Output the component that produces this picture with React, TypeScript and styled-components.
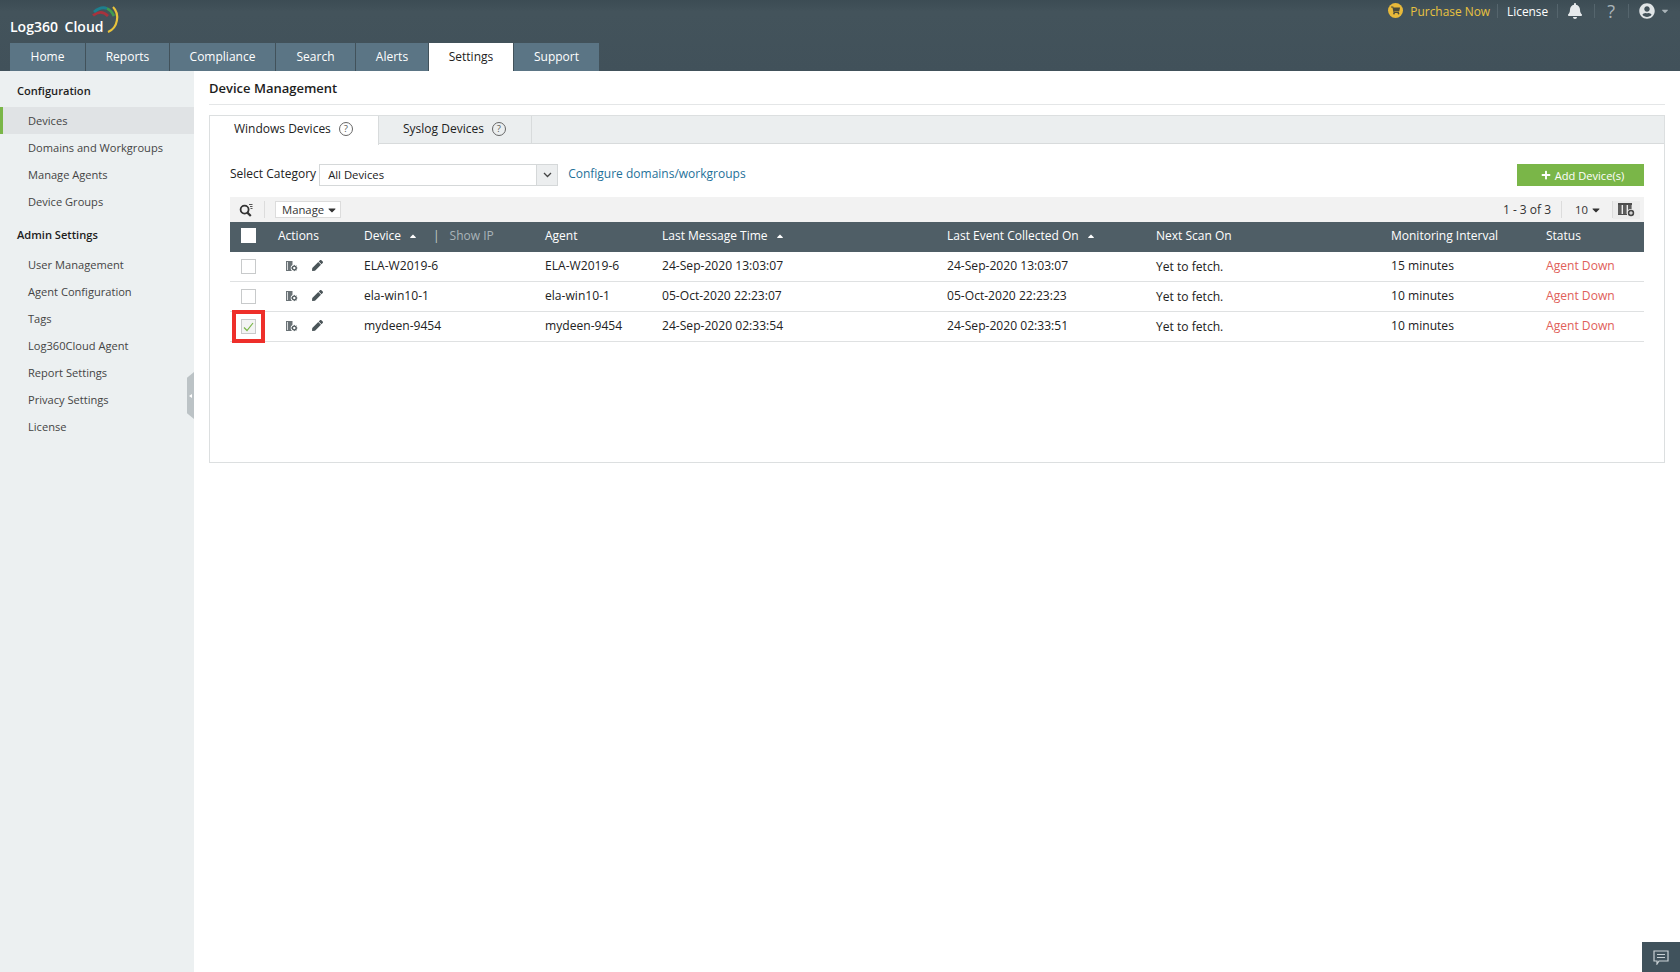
import React from "react";
import styled, { createGlobalStyle } from "styled-components";
import { FaBell, FaUserCircle, FaPen, FaPlus, FaShoppingCart, FaCaretDown, FaCaretUp } from "react-icons/fa";

const Global = createGlobalStyle`
  html, body { margin: 0; padding: 0; height: 100%; background: #fff; }
  body { font-family: "Open Sans", "Liberation Sans", sans-serif; font-size: 12px; color: #222; overflow: hidden; }
  #root { height: 100%; }
  * { box-sizing: border-box; }
`;

const Page = styled.div`
  height: 972px;
  display: flex;
  flex-direction: column;
  position: relative;
`;
const Header = styled.header`
  height: 71px;
  flex: none;
  background: linear-gradient(#3c4c54 0, #43535b 12px, #41515a 100%);
  padding: 0 0 0 10px;
  display: flex;
  flex-direction: column;
  justify-content: space-between;
`;
const TopRow = styled.div`
  height: 43px;
  display: flex;
  justify-content: space-between;
`;
const LogoWrap = styled.div`
  display: flex;
  align-items: flex-start;
  position: relative;
  width: 120px;
`;
const LogoText = styled.span`
  margin-top: 17px;
  color: #fff;
  font-size: 14px;
  font-weight: 600;
  white-space: nowrap;
  word-spacing: 3px;
`;
const LogoArc = styled.svg`
  position: absolute;
  left: 80px;
  top: 4px;
`;
const TopLinks = styled.div`
  display: flex;
  align-items: center;
  height: 21px;
  padding-right: 10px;
  color: #fff;
`;
const Cart = styled.span`
  width: 15px;
  height: 15px;
  border-radius: 50%;
  background: #e8b93a;
  color: #4a4a3a;
  display: inline-flex;
  align-items: center;
  justify-content: center;
  font-size: 9px;
  margin-right: 7px;
`;
const Purchase = styled.span`
  color: #e9c23f;
  font-size: 11.9px;
`;
const License = styled.span`
  color: #fff;
  font-size: 11.9px;
`;
const TopSep = styled.span<{ $l: number; $r: number }>`
  width: 1px;
  height: 14px;
  background: #55656d;
  margin: 0 ${(p) => p.$r}px 0 ${(p) => p.$l}px;
`;
const BellIcon = styled.span`
  color: #e6eaec;
  display: inline-flex;
  align-items: center;
  font-size: 16px;
`;
const UserIcon = styled.span`
  color: #dfe4e6;
  display: inline-flex;
  align-items: center;
  font-size: 16px;
`;
const UserCaret = styled.span`
  color: #aab4b9;
  display: inline-flex;
  align-items: center;
  font-size: 10px;
  margin-left: 5px;
`;
const Question = styled.span`
  color: #aab4b9;
  font-size: 18px;
  line-height: 1;
`;
const MainTabs = styled.nav`
  display: flex;
  height: 28px;
  gap: 1px;
`;
const MainTab = styled.div<{ $w: number; $active?: boolean }>`
  width: ${(p) => p.$w}px;
  background: ${(p) => (p.$active ? "#fff" : "#5b7585")};
  color: ${(p) => (p.$active ? "#222" : "#fff")};
  display: flex;
  align-items: center;
  justify-content: center;
  font-size: 12px;
  padding-bottom: 1px;
`;
const Body = styled.div`
  flex: 1;
  display: flex;
  min-height: 0;
`;
const Sidebar = styled.aside`
  width: 194px;
  flex: none;
  background: #ecf0f1;
  position: relative;
  padding-top: 6px;
`;
const SideHead = styled.div<{ $top?: number; $h: number; $pb: number }>`
  height: ${(p) => p.$h}px;
  margin-top: ${(p) => p.$top ?? 0}px;
  padding: 0 0 ${(p) => p.$pb}px 17px;
  display: flex;
  align-items: center;
  font-size: 11.1px;
  font-weight: 600;
  color: #1d1d1d;
`;
const SideItem = styled.div<{ $active?: boolean }>`
  height: 27px;
  padding-left: ${(p) => (p.$active ? 25 : 28)}px;
  display: flex;
  align-items: center;
  font-size: 11.1px;
  color: #444;
  background: ${(p) => (p.$active ? "#e0e3e5" : "transparent")};
  border-left: ${(p) => (p.$active ? "3px solid #7ab648" : "none")};
`;
const Handle = styled.div`
  position: absolute;
  right: 0;
  top: 301px;
  width: 7px;
  height: 47px;
  background: #bcc3c6;
  clip-path: polygon(100% 0, 100% 100%, 0 88%, 0 12%);
  display: flex;
  align-items: center;
  justify-content: center;
  &::after {
    content: "";
    border: 2px solid transparent;
    border-right: 3px solid #fff;
    border-left: 0;
  }
`;
const Content = styled.main`
  flex: 1;
  padding: 0 15px 0 15px;
  min-width: 0;
`;
const Title = styled.h1`
  margin: 0;
  height: 34px;
  font-size: 13px;
  font-weight: 600;
  color: #1d1d1d;
  display: flex;
  align-items: center;
  border-bottom: 1px solid #e4e6e7;
`;
const Panel = styled.section`
  margin-top: 10px;
  height: 348px;
  border: 1px solid #dcdfe0;
`;
const PanelTabs = styled.div`
  height: 28px;
  display: flex;
  background: #ebeeef;
  border-bottom: 1px solid #d8dbdc;
`;
const PanelTab = styled.div<{ $w: number; $active?: boolean }>`
  width: ${(p) => p.$w}px;
  height: ${(p) => (p.$active ? 29 : 28)}px;
  padding: 0 0 ${(p) => (p.$active ? 4 : 3)}px 24px;
  background: ${(p) => (p.$active ? "#fff" : "transparent")};
  border-right: 1px solid #d8dbdc;
  display: flex;
  align-items: center;
  font-size: 12px;
  color: #222;
  gap: 8px;
`;
const Help = styled.span`
  width: 14px;
  height: 14px;
  border: 1px solid #666;
  border-radius: 50%;
  display: inline-flex;
  align-items: center;
  justify-content: center;
  font-size: 9.5px;
  color: #555;
`;
const PanelBody = styled.div`
  padding: 20px 20px 0 20px;
  position: relative;
`;
const FilterRow = styled.div`
  display: flex;
  align-items: center;
  height: 22px;
`;
const FilterLabel = styled.label`
  font-size: 12px;
  color: #222;
  margin-right: 3px;
  margin-top: -3px;
`;
const Select = styled.div`
  width: 239px;
  height: 22px;
  border: 1px solid #d5d8d9;
  display: flex;
  font-size: 11.3px;
  align-items: center;
  padding-left: 8px;
  justify-content: space-between;
  color: #222;
  line-height: 18px;
`;
const SelectArrow = styled.span`
  width: 21px;
  height: 20px;
  background: #eceeef;
  border-left: 1px solid #d5d8d9;
  display: flex;
  align-items: center;
  justify-content: center;
`;
const ConfLink = styled.a`
  color: #1f7199;
  font-size: 12px;
  margin-left: 10px;
  margin-top: -3px;
`;
const AddButton = styled.button`
  margin-left: auto;
  width: 127px;
  height: 22px;
  padding: 0 0 0 4px;
  background: #7ab648;
  border: 0;
  color: #fff;
  font: inherit;
  font-size: 11.1px;
  display: flex;
  align-items: center;
  justify-content: center;
  gap: 4px;
`;
const Toolbar = styled.div`
  margin-top: 11px;
  height: 25px;
  background: #f2f2f2;
  display: flex;
  align-items: center;
  padding-left: 9px;
`;
const ToolSep = styled.span<{ $l: number; $r: number }>`
  width: 1px;
  height: 17px;
  background: #dcdcdc;
  margin: 0 ${(p) => p.$r}px 0 ${(p) => p.$l}px;
`;
const ManageBtn = styled.div`
  width: 66px;
  height: 17px;
  background: #fff;
  border: 1px solid #dcdcdc;
  display: flex;
  align-items: center;
  padding-left: 6px;
  gap: 2px;
  font-size: 11.3px;
  color: #333;
`;
const Pager = styled.div`
  margin-left: auto;
  padding-right: 4px;
  display: flex;
  align-items: center;
  font-size: 12px;
  color: #333;
`;
const PageSize = styled.span`
  display: inline-flex;
  align-items: center;
  gap: 2px;
  font-size: 11.3px;
`;
const ColBtn = styled.span`
  width: 27px;
  height: 18px;
  display: inline-flex;
  align-items: center;
  justify-content: center;
  background: #ececec;
`;
const cols = "48px 86px 181px 117px 285px 209px 235px 155px 98px";
const HeadRow = styled.div`
  display: grid;
  grid-template-columns: ${cols};
  height: 30px;
  padding-bottom: 3px;
  background: #4f5e66;
  color: #fff;
  font-size: 12px;
  align-items: center;
`;
const Row = styled.div`
  display: grid;
  grid-template-columns: ${cols};
  height: 30px;
  align-items: center;
  border-bottom: 1px solid #dfe1e2;
  font-size: 12.1px;
  color: #222;
`;
const CheckCell = styled.div`
  display: flex;
  padding-left: 11px;
  position: relative;
`;
const Check = styled.span<{ $head?: boolean; $on?: boolean }>`
  width: 15px;
  height: 15px;
  background: ${(p) => (p.$on ? "#f3f4f4" : "#fff")};
  border: 1px solid ${(p) => (p.$head ? "#fff" : "#c8cacb")};
  display: flex;
  align-items: center;
  justify-content: center;
`;
const RedBox = styled.span`
  position: absolute;
  left: 2px;
  top: -9px;
  width: 33px;
  height: 33px;
  border: 4px solid #ee2f2a;
`;
const HeadCell = styled.div`
  display: flex;
  align-items: center;
`;
const SortCaret = styled.span`
  display: inline-flex;
  margin-left: 7px;
  font-size: 10px;
  color: #fff;
`;
const DevSep = styled.span`
  margin: 0 10px 0 15px;
  color: #c5ccd0;
`;
const ShowIp = styled.span`
  color: #aab4b9;
`;
const ActionCell = styled.div`
  display: flex;
  align-items: center;
  gap: 14px;
  padding-left: 7px;
  margin-top: -2px;
`;
const PenIcon = styled.span`
  color: #4b5559;
  font-size: 11px;
  display: inline-flex;
`;
const Cell = styled.div<{ $dy?: number }>`
  margin-top: ${(p) => p.$dy ?? -2}px;
`;
const StatusCell = styled.div`
  color: #e0605a;
  margin-top: -2px;
`;
const ChatBtn = styled.div`
  position: absolute;
  right: 0;
  bottom: 0;
  width: 38px;
  height: 30px;
  background: #40525c;
  display: flex;
  align-items: center;
  justify-content: center;
`;

const tabs: [string, number][] = [["Home", 75], ["Reports", 83], ["Compliance", 105], ["Search", 79], ["Alerts", 72], ["Settings", 84], ["Support", 85]];
const config = ["Domains and Workgroups", "Manage Agents", "Device Groups"];
const admin = ["User Management", "Agent Configuration", "Tags", "Log360Cloud Agent", "Report Settings", "Privacy Settings", "License"];
const rows = [
  ["ELA-W2019-6", "ELA-W2019-6", "24-Sep-2020 13:03:07", "24-Sep-2020 13:03:07", "15 minutes"],
  ["ela-win10-1", "ela-win10-1", "05-Oct-2020 22:23:07", "05-Oct-2020 22:23:23", "10 minutes"],
  ["mydeen-9454", "mydeen-9454", "24-Sep-2020 02:33:54", "24-Sep-2020 02:33:51", "10 minutes"],
];

const ManageIcon = () => (
  <svg width="13" height="12" viewBox="0 0 13 12">
    <path d="M1 1h6.5v10H1z" fill="#6a7276" />
    <path d="M2.5 2v8" stroke="#d8dbdc" strokeWidth="1" />
    <circle cx="9.3" cy="8" r="3.6" fill="#fff" />
    <circle cx="9.3" cy="8" r="1.9" fill="none" stroke="#50595d" strokeWidth="1.4" />
    <path d="M9.3 4.9v1.2M9.3 9.9v1.2M6.2 8h1.2M11.2 8h1.2M7.1 5.8l.8.8M10.7 9.4l.8.8M11.5 5.8l-.8.8M7.9 9.4l-.8.8" stroke="#50595d" strokeWidth="0.9" />
  </svg>
);

const SearchIcon = () => (
  <svg width="14" height="14" viewBox="0 0 14 14">
    <circle cx="5.6" cy="6.6" r="4" fill="none" stroke="#333" strokeWidth="1.8" />
    <path d="M8.4 9.6l3.4 3.4" stroke="#333" strokeWidth="2.2" />
    <path d="M10 1.5h3.5M11 3.5h2.5M11.5 5.5h2" stroke="#555" strokeWidth="1" />
  </svg>
);

const ColumnsIcon = () => (
  <svg width="17" height="15" viewBox="0 0 17 15">
    <path d="M0 1h14v2H0z" fill="#4d4d4d" />
    <path d="M0 3h3.6v9H0zM5 3h3.6v9H5zM10 3h3.6v6H10z" fill="#5c5c5c" />
    <path d="M0 12h9v1H0z" fill="#4d4d4d" />
    <circle cx="13" cy="11" r="4" fill="#ececec" />
    <circle cx="13" cy="11" r="3.2" fill="#444" />
    <path d="M13 9.2v3.6M11.2 11h3.6" stroke="#fff" strokeWidth="1" />
  </svg>
);

export default function App() {
  return (
    <Page>
      <Global />
      <Header>
        <TopRow>
          <LogoWrap>
            <LogoText>Log360 Cloud</LogoText>
            <LogoArc width="34" height="32" viewBox="0 0 34 32">
              <path d="M3 11.5 Q11 5 18 12" fill="none" stroke="#a8333d" strokeWidth="2.8" />
              <path d="M4 8 Q11 2 17 4.5" fill="none" stroke="#1d7f8e" strokeWidth="2.8" />
              <path d="M17 4.5 Q21 6 24 12" fill="none" stroke="#3f9a4f" strokeWidth="2.8" />
              <path d="M23 3 C30 10 28 24 18 28" fill="none" stroke="#e8c33c" strokeWidth="2.2" />
            </LogoArc>
          </LogoWrap>
          <TopLinks>
            <Cart><FaShoppingCart /></Cart>
            <Purchase>Purchase Now</Purchase>
            <TopSep $l={7} $r={9} />
            <License>License</License>
            <TopSep $l={9} $r={9} />
            <BellIcon><FaBell /></BellIcon>
            <TopSep $l={11} $r={12} />
            <Question>?</Question>
            <TopSep $l={13} $r={10} />
            <UserIcon><FaUserCircle /></UserIcon>
            <UserCaret><FaCaretDown /></UserCaret>
          </TopLinks>
        </TopRow>
        <MainTabs>
          {tabs.map(([t, w]) => (
            <MainTab key={t} $w={w} $active={t === "Settings"}>{t}</MainTab>
          ))}
        </MainTabs>
      </Header>
      <Body>
        <Sidebar>
          <SideHead $h={30} $pb={3}>Configuration</SideHead>
          <SideItem $active>Devices</SideItem>
          {config.map((c) => <SideItem key={c}>{c}</SideItem>)}
          <SideHead $top={5} $h={31} $pb={3}>Admin Settings</SideHead>
          {admin.map((c) => <SideItem key={c}>{c}</SideItem>)}
          <Handle />
        </Sidebar>
        <Content>
          <Title>Device Management</Title>
          <Panel>
            <PanelTabs>
              <PanelTab $w={169} $active>Windows Devices <Help>?</Help></PanelTab>
              <PanelTab $w={153}>Syslog Devices <Help>?</Help></PanelTab>
            </PanelTabs>
            <PanelBody>
              <FilterRow>
                <FilterLabel>Select Category</FilterLabel>
                <Select>
                  All Devices
                  <SelectArrow>
                    <svg width="9" height="6" viewBox="0 0 9 6"><path d="M1 1l3.5 3.5L8 1" fill="none" stroke="#444" strokeWidth="1.3" /></svg>
                  </SelectArrow>
                </Select>
                <ConfLink>Configure domains/workgroups</ConfLink>
                <AddButton><FaPlus size={10} /> Add Device(s)</AddButton>
              </FilterRow>
              <Toolbar>
                <SearchIcon />
                <ToolSep $l={11} $r={10} />
                <ManageBtn>Manage <FaCaretDown size={12} /></ManageBtn>
                <Pager>
                  1 - 3 of 3
                  <ToolSep $l={10} $r={13} />
                  <PageSize>10 <FaCaretDown size={12} /></PageSize>
                  <ToolSep $l={10} $r={0} />
                  <ColBtn><ColumnsIcon /></ColBtn>
                </Pager>
              </Toolbar>
              <HeadRow>
                <CheckCell><Check $head /></CheckCell>
                <div>Actions</div>
                <HeadCell>
                  Device <SortCaret><FaCaretUp /></SortCaret>
                  <DevSep>|</DevSep>
                  <ShowIp>Show IP</ShowIp>
                </HeadCell>
                <div>Agent</div>
                <HeadCell>Last Message Time <SortCaret><FaCaretUp /></SortCaret></HeadCell>
                <HeadCell>Last Event Collected On <SortCaret><FaCaretUp /></SortCaret></HeadCell>
                <div>Next Scan On</div>
                <div>Monitoring Interval</div>
                <div>Status</div>
              </HeadRow>
              {rows.map((r, i) => (
                <Row key={r[0]}>
                  <CheckCell>
                    <Check $on={i === 2}>
                      {i === 2 && (
                        <svg width="11" height="10" viewBox="0 0 11 10"><path d="M1 5.5l3 3L10 1" fill="none" stroke="#7ab648" strokeWidth="1.2" /></svg>
                      )}
                    </Check>
                    {i === 2 && <RedBox />}
                  </CheckCell>
                  <ActionCell>
                    <ManageIcon />
                    <PenIcon><FaPen /></PenIcon>
                  </ActionCell>
                  <Cell>{r[0]}</Cell>
                  <Cell>{r[1]}</Cell>
                  <Cell>{r[2]}</Cell>
                  <Cell>{r[3]}</Cell>
                  <Cell $dy={0}>Yet to fetch.</Cell>
                  <Cell>{r[4]}</Cell>
                  <StatusCell>Agent Down</StatusCell>
                </Row>
              ))}
            </PanelBody>
          </Panel>
        </Content>
      </Body>
      <ChatBtn>
        <svg width="16" height="15" viewBox="0 0 16 15">
          <path d="M1 1h14v10H6l-2 3v-3H1z" fill="none" stroke="#c9d1d5" strokeWidth="1.2" />
          <path d="M4 4.5h8M4 7.5h8" stroke="#c9d1d5" strokeWidth="1.2" />
        </svg>
      </ChatBtn>
    </Page>
  );
}
